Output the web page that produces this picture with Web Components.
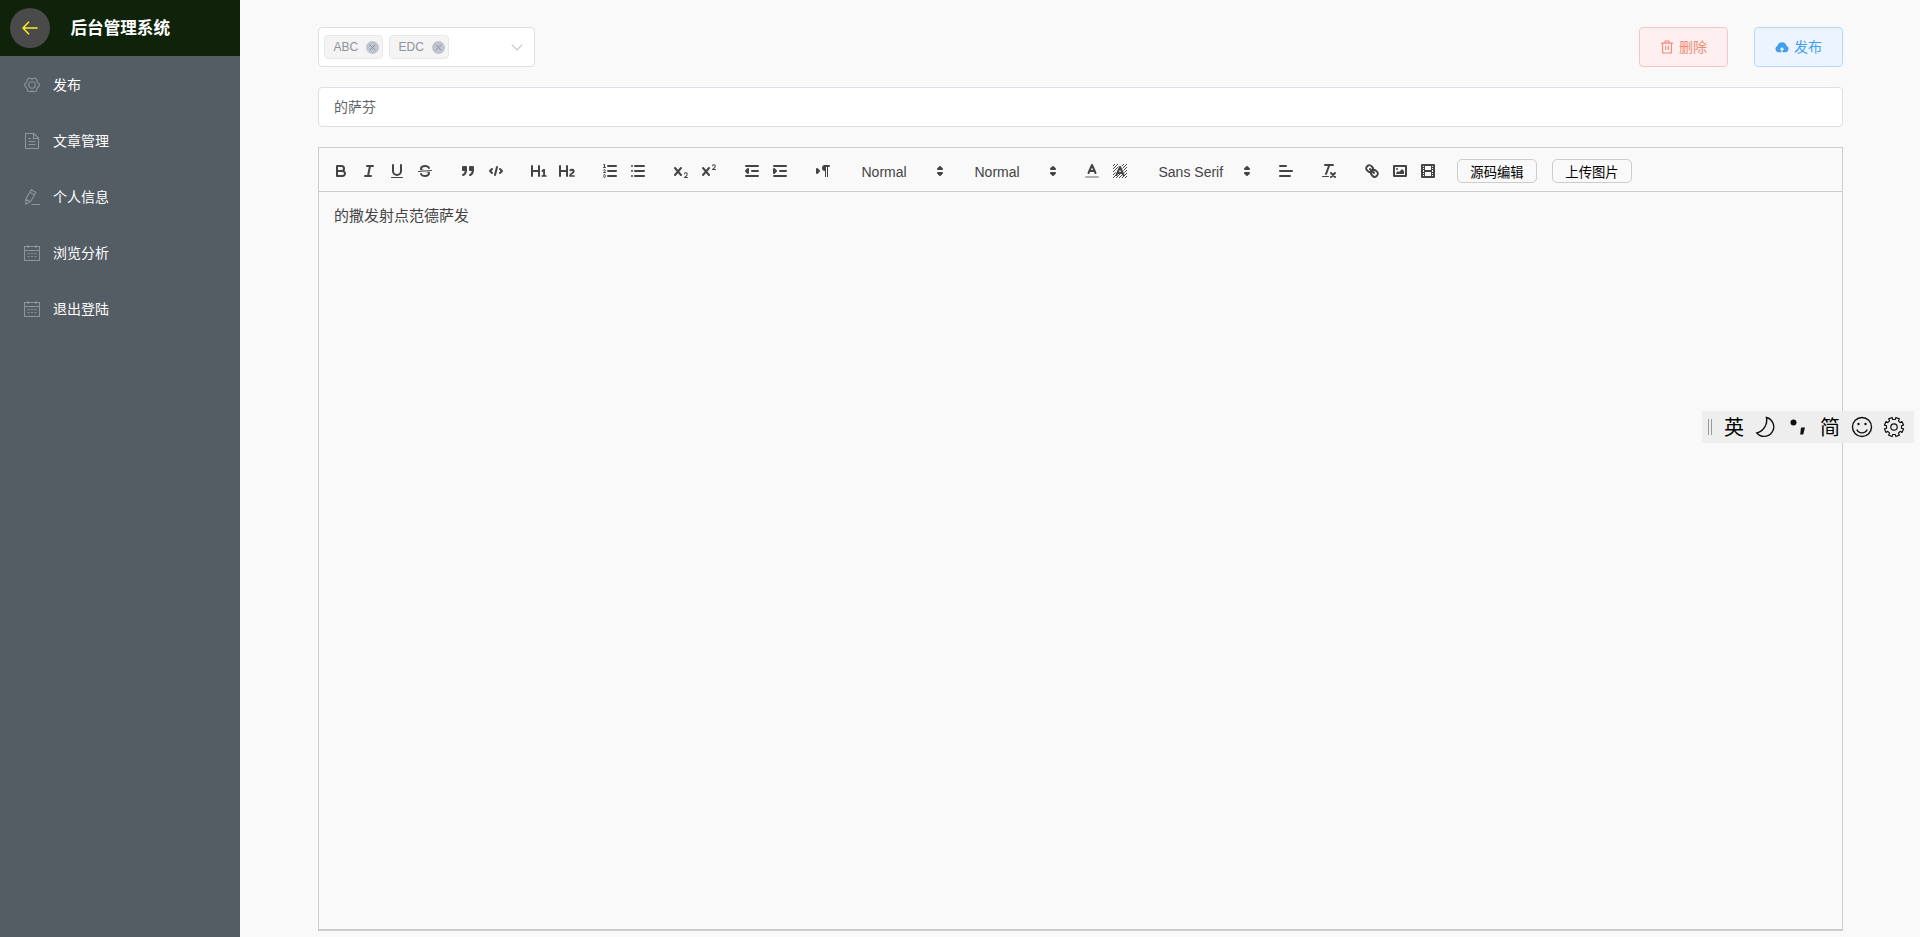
<!DOCTYPE html>
<html lang="zh-CN">
<head>
<meta charset="utf-8">
<title>后台管理系统</title>
<style>
html, body {
    margin: 0;
    height: 100%;
    overflow: hidden;
}
body {
    background: #f9f9f9;
    font-family: "Liberation Sans", "Noto Sans CJK SC", sans-serif;
    font-size: 14px;
    color: #606266;
}
</style>
</head>
<body>
<admin-layout>
    <side-menu slot="aside" heading="后台管理系统">
        <menu-item icon="setting">发布</menu-item>
        <menu-item icon="document">文章管理</menu-item>
        <menu-item icon="edit">个人信息</menu-item>
        <menu-item icon="date">浏览分析</menu-item>
        <menu-item icon="date">退出登陆</menu-item>
    </side-menu>
    <action-row>
        <tag-select>
            <tag-chip>ABC</tag-chip>
            <tag-chip>EDC</tag-chip>
        </tag-select>
        <action-button slot="actions" type="danger" icon="delete">删除</action-button>
        <action-button slot="actions" type="primary" icon="upload">发布</action-button>
    </action-row>
    <text-field>的萨芬</text-field>
    <rich-editor>
        <tool-group slot="toolbar" icons="bold italic underline strike"></tool-group>
        <tool-group slot="toolbar" icons="quote code"></tool-group>
        <tool-group slot="toolbar" icons="h1 h2"></tool-group>
        <tool-group slot="toolbar" icons="ordered bullet"></tool-group>
        <tool-group slot="toolbar" icons="sub super"></tool-group>
        <tool-group slot="toolbar" icons="outdent indent"></tool-group>
        <tool-group slot="toolbar" icons="direction"></tool-group>
        <tool-picker slot="toolbar">Normal</tool-picker>
        <tool-picker slot="toolbar">Normal</tool-picker>
        <tool-group slot="toolbar" icons="color background"></tool-group>
        <tool-picker slot="toolbar" wide>Sans Serif</tool-picker>
        <tool-group slot="toolbar" icons="align"></tool-group>
        <tool-group slot="toolbar" icons="clean"></tool-group>
        <tool-group slot="toolbar" icons="link image video"></tool-group>
        <tool-button slot="toolbar">源码编辑</tool-button>
        <tool-button slot="toolbar">上传图片</tool-button>
        的撒发射点范德萨发
    </rich-editor>
</admin-layout>
<ime-bar></ime-bar>

<script>
// editor icons, 18x18 box. s = stroke, f = fill, t = thin
const toolIcons = {
    bold: '<path class="s" d="M5,4H9.5A2.5,2.5,0,0,1,12,6.5v0A2.5,2.5,0,0,1,9.5,9H5V4Z"/><path class="s" d="M5,9h5.5A2.5,2.5,0,0,1,13,11.5v0A2.5,2.5,0,0,1,10.5,14H5V9Z"/>',
    italic: '<path class="s" d="M7,4H13M5,14H11M8,14L10,4"/>',
    underline: '<path class="s" d="M5,3V9a4.012,4.012,0,0,0,4,4H9a4.012,4.012,0,0,0,4-4V3"/><rect class="f" height="1" rx="0.5" width="12" x="3" y="15"/>',
    strike: '<path class="s t" d="M15.5,8.5L2.5,9.5"/><path class="f" d="M9.007,8C6.542,7.791,6,7.519,6,6.5,6,5.792,7.283,5,9,5c1.571,0,2.765.679,2.969,1.309a1,1,0,0,0,1.9-.617C13.356,4.106,11.354,3,9,3,6.2,3,4,4.538,4,6.5a3.2,3.2,0,0,0,.5,1.843Z"/><path class="f" d="M8.984,10C11.457,10.208,12,10.479,12,11.5c0,0.708-1.283,1.5-3,1.5-1.571,0-2.765-.679-2.969-1.309a1,1,0,1,0-1.9.617C4.644,13.894,6.646,15,9,15c2.8,0,5-1.538,5-3.5a3.2,3.2,0,0,0-.5-1.843Z"/>',
    quote: '<rect class="f s" height="3" width="3" x="4" y="5"/><rect class="f s" height="3" width="3" x="11" y="5"/><path class="f s" d="M7,8c0,4.031-3,5-3,5"/><path class="f s" d="M14,8c0,4.031-3,5-3,5"/>',
    code: '<path class="s" d="M5,7L3,9L5,11M13,7L15,9L13,11M10,5L8,13"/>',
    h1: '<path class="f" d="M10,4V14a1,1,0,0,1-2,0V10H3v4a1,1,0,0,1-2,0V4A1,1,0,0,1,3,4V8H8V4a1,1,0,0,1,2,0Zm6.06787,9.209H14.98975V7.59863a.54085.54085,0,0,0-.605-.60547h-.62744a1.01119,1.01119,0,0,0-.748.29688L11.645,8.56641a.5435.5435,0,0,0-.022.8584l.28613.30762a.53861.53861,0,0,0,.84717.0332l.09912-.08789a1.2137,1.2137,0,0,0,.2417-.35254h.02246s-.01123.30859-.01123.60547V13.209H12.041a.54085.54085,0,0,0-.605.60547v.43945a.54085.54085,0,0,0,.605.60547h4.02686a.54085.54085,0,0,0,.605-.60547v-.43945A.54085.54085,0,0,0,16.06787,13.209Z"/>',
    h2: '<path class="f" d="M16.73975,13.81445v.43945a.54085.54085,0,0,1-.605.60547H11.855a.58392.58392,0,0,1-.64893-.60547V14.0127c0-2.90527,3.39941-3.42187,3.39941-4.55469a.77675.77675,0,0,0-.84717-.78125,1.17684,1.17684,0,0,0-.83594.38477c-.2749.26367-.561.374-.85791.13184l-.4292-.34082c-.30811-.24219-.38525-.51758-.1543-.81445a2.97155,2.97155,0,0,1,2.45361-1.17676,2.45393,2.45393,0,0,1,2.68408,2.40918c0,2.45312-3.1792,2.92676-3.27832,3.93848h2.79443A.54085.54085,0,0,1,16.73975,13.81445ZM9,3A.99974.99974,0,0,0,8,4V8H3V4A1,1,0,0,0,1,4V14a1,1,0,0,0,2,0V10H8v4a1,1,0,0,0,2,0V4A.99974.99974,0,0,0,9,3Z"/>',
    ordered: '<path class="s" d="M7,4H15M7,9H15M7,14H15"/><path class="s t" d="M2.5,5.5H4.5"/><path class="f" d="M3.5,6A0.5,0.5,0,0,1,3,5.5V3.085l-0.276.138A0.5,0.5,0,0,1,2.053,3c-0.124-.247-0.023-0.324.224-0.447l1-.5A0.5,0.5,0,0,1,4,2.5v3A0.5,0.5,0,0,1,3.5,6Z"/><path class="s t" d="M4.5,10.5h-2c0-.234,1.85-1.076,1.85-2.234A0.959,0.959,0,0,0,2.5,8.156"/><path class="s t" d="M2.5,14.846a0.959,0.959,0,0,0,1.85-.109A0.7,0.7,0,0,0,3.75,14a0.688,0.688,0,0,0,.6-0.736,0.959,0.959,0,0,0-1.85-.109"/>',
    bullet: '<path class="s" d="M6,4H15M6,9H15M6,14H15M3,4H3M3,9H3M3,14H3"/>',
    sub: '<path class="f" d="M15.5,15H13.861a3.858,3.858,0,0,0,1.914-2.975,1.8,1.8,0,0,0-1.6-1.751A1.921,1.921,0,0,0,12.021,11.7a0.50013,0.50013,0,1,0,.957.291h0a0.914,0.914,0,0,1,1.053-.725,0.81,0.81,0,0,1,.744.762c0,1.076-1.16971,1.86982-1.93971,2.43082A1.45639,1.45639,0,0,0,12,15.5a0.5,0.5,0,0,0,.5.5h3A0.5,0.5,0,0,0,15.5,15Z"/><path class="s" d="M3,6L9,13M9,6L3,13"/>',
    super: '<path class="f" transform="translate(0,-8)" d="M15.5,15H13.861a3.858,3.858,0,0,0,1.914-2.975,1.8,1.8,0,0,0-1.6-1.751A1.921,1.921,0,0,0,12.021,11.7a0.50013,0.50013,0,1,0,.957.291h0a0.914,0.914,0,0,1,1.053-.725,0.81,0.81,0,0,1,.744.762c0,1.076-1.16971,1.86982-1.93971,2.43082A1.45639,1.45639,0,0,0,12,15.5a0.5,0.5,0,0,0,.5.5h3A0.5,0.5,0,0,0,15.5,15Z"/><path class="s" d="M3,6L9,13M9,6L3,13"/>',
    outdent: '<path class="s" d="M3,14H15M3,4H15M9,9H15"/><path class="f s" d="M5,7V11L3,9L5,7"/>',
    indent: '<path class="s" d="M3,14H15M3,4H15M9,9H15"/><path class="f s" d="M3,7V11L5,9L3,7"/>',
    direction: '<path class="f s" d="M3,11L5,9L3,7V11"/><path class="s" d="M15,4H11"/><path class="f" d="M11,3a3,3,0,0,0,0,6h1V3H11Z"/><rect class="f" height="11" width="1" x="11" y="4"/><rect class="f" height="11" width="1" x="13" y="4"/>',
    color: '<path class="s" opacity=".4" d="M3,15H15"/><path class="s" d="M5.5,11L9,3L12.5,11M11.63,9H6.38"/>',
    background: '<defs><pattern id="hatch" width="3" height="3" patternUnits="userSpaceOnUse"><path d="M0,2h1v1h-1zM1,1h1v1h-1zM2,0h1v1h-1z" fill="#444"/></pattern></defs><path fill="url(#hatch)" d="M2,2H16V16H2Z"/><path d="M5.5,13L9,5L12.5,13" fill="none" stroke="#f9f9f9" stroke-width="3.6"/><path class="s" d="M5.5,13L9,5L12.5,13M11.63,11H6.38"/>',
    align: '<path class="s" d="M3,9H15M3,14H13M3,4H9"/>',
    clean: '<path class="s" d="M5,3H13M6,12L9.35,3M11,11L15,15M15,11L11,15"/><rect class="f" height="1" rx="0.5" width="7" x="2" y="14"/>',
    link: '<path class="s" d="M7,7L11,11"/><path class="s" d="M8.9,4.577a3.476,3.476,0,0,1,.36,4.679A3.476,3.476,0,0,1,4.577,8.9C3.185,7.5,2.035,6.4,4.217,4.217S7.5,3.185,8.9,4.577Z"/><path class="s" d="M13.423,9.1a3.476,3.476,0,0,0-4.679-.36,3.476,3.476,0,0,0,.36,4.679c1.392,1.392,2.5,2.542,4.679.36S14.815,10.5,13.423,9.1Z"/>',
    image: '<rect class="s" height="10" width="12" x="3" y="4"/><circle class="f" cx="6" cy="7" r="1"/><path class="f" d="M5,12V11L7,9L8,10L11,7L13,9V12Z"/>',
    video: '<rect class="s" height="12" width="12" x="3" y="3"/><path class="f" d="M5,3h1v12h-1zM12,3h1v12h-1zM5,8h8v2h-8zM3,5h3v1h-3zM3,7h3v1h-3zM3,10h3v1h-3zM3,12h3v1h-3zM12,5h3v1h-3zM12,7h3v1h-3zM12,10h3v1h-3zM12,12h3v1h-3z"/>'
};
const toolStyle = `
svg { display: block; width: 18px; height: 18px; }
.s { fill: none; stroke: #444; stroke-width: 2; stroke-linecap: round; stroke-linejoin: round; }
.t { stroke-width: 1; }
.f { fill: #444; }
`;

// six soft bumps round a circle
function cogPath() {
    const pts = [];
    for (let a = 0; a < 360; a += 10) {
        const rad = a * Math.PI / 180;
        const r = 6.8 + 0.7 * Math.cos(rad * 6);
        pts.push((8 + r * Math.cos(rad)).toFixed(2) + ' ' + (8 + r * Math.sin(rad)).toFixed(2));
    }
    return 'M' + pts.join('L') + 'Z';
}

// icons used outside of the editor, 16x16 box
const icons = {
    setting: '<path d="' + cogPath() + '"/><circle cx="8" cy="8" r="3.3"/>',
    document: '<path d="M1.500 .5H10L14.500 5V15.500H1.500zM9.500 .5V5.500H14.500M4.500 5.500H7M4.500 8.500H11.500M4.500 11.500H11.500"/>',
    edit: '<path d="M7.200 .8L11.800 3.500 6.500 12.700 1.800 15.200 1.900 10zM5.800 3.200L10.400 5.900M1.900 10.300L6.200 12.800M7.500 15.500H16"/>',
    date: '<path d="M.5 1.500H15.500V15.500H.5zM.5 5.500H15.500M4 0V3M12 0V3M3.500 8.500H5.500M7 8.500H9M10.500 8.500H12.500M3.500 11.500H5.500M7 11.500H9M10.500 11.500H12.500"/>',
    delete: '<path d="M3 3.500V14.800H13V3.500M1 3.500H15M5.800 3V1.200H10.200V3M6.500 6.500V11.500M9.500 6.500V11.500"/>',
    upload: '<path fill="currentColor" stroke="none" fill-rule="evenodd" d="M4.500 14A3.800 3.800 0 0 1 2.900 6.700 5.200 5.200 0 0 1 13.100 6.700 3.800 3.800 0 0 1 11.500 14H8.700V11.200H10.800L8 8 5.200 11.200H7.300V14z"/>'
};

function define(name, html, setup) {
    const template = document.createElement('template');
    template.innerHTML = html;
    customElements.define(name, class extends HTMLElement {
        constructor() {
            super();
            this.attachShadow({mode: 'open'});
            this.shadowRoot.appendChild(template.content.cloneNode(true));
            if (setup) setup(this, this.shadowRoot);
        }
    });
}

function drawIcon(el, root) {
    root.querySelector('svg').innerHTML = icons[el.getAttribute('icon')];
}

define('admin-layout', `
<style>
:host { display: flex; height: 100vh; }
main {
    flex: 1;
    display: flex;
    flex-direction: column;
    gap: 20px;
    box-sizing: border-box;
    padding: 27px 77px 6px 78px;
    min-width: 0;
}
</style>
<slot name="aside"></slot>
<main><slot></slot></main>`);

define('side-menu', `
<style>
:host { display: block; width: 240px; background: #545c64; flex: none; }
header {
    display: flex;
    align-items: center;
    height: 56px;
    padding-left: 10px;
    background: #0f230b;
    color: #fff;
}
.back {
    display: flex;
    align-items: center;
    justify-content: center;
    width: 40px;
    height: 40px;
    border-radius: 50%;
    background: #4a4a4a;
}
h1 { margin: 2px 0 0 20.5px; font-size: 16.6px; font-weight: bold; line-height: 24px; }
</style>
<header>
    <div class="back"><svg width="16" height="14" viewBox="0 0 16 14" fill="none" stroke="#ffee20" stroke-width="1.500"><path d="M15.500 7H1M7 .8L1 7l6 6.200"/></svg></div>
    <h1></h1>
</header>
<nav><slot></slot></nav>`, (el, root) => {
    root.querySelector('h1').innerText = el.getAttribute('heading');
});

define('menu-item', `
<style>
:host { display: flex; align-items: center; height: 56px; padding-left: 24px; color: #fff; font-size: 14px; }
svg { width: 16px; height: 16px; margin: 2px 13px 0 0; color: #909399; }
</style>
<svg viewBox="0 0 16 16" fill="none" stroke="currentColor" stroke-width="1.100"></svg>
<slot></slot>`, drawIcon);

define('action-row', `
<style>
:host { display: flex; justify-content: space-between; height: 40px; flex: none; }
div { display: flex; gap: 26px; }
</style>
<slot></slot>
<div><slot name="actions"></slot></div>`);

define('tag-select', `
<style>
:host {
    display: flex;
    align-items: center;
    gap: 6px;
    box-sizing: border-box;
    width: 217px;
    height: 40px;
    padding: 0 11px 0 5px;
    background: #fff;
    border: 1px solid #dcdfe6;
    border-radius: 4px;
}
svg { margin-left: auto; }
</style>
<slot></slot>
<svg width="12" height="7" viewBox="0 0 12 7" fill="none" stroke="#c0c4cc" stroke-width="1.100"><path d="M.7.700L6 6 11.300.7"/></svg>`);

define('tag-chip', `
<style>
:host {
    display: flex;
    align-items: center;
    justify-content: space-between;
    box-sizing: border-box;
    height: 24px;
    width: 59px;
    padding: 0 3px 0 8.500px;
    background: #f4f4f5;
    border: 1px solid #e9e9eb;
    border-radius: 4px;
    color: #909399;
    font-size: 12px;
}
:host(:last-of-type) { width: 60px; }
</style>
<span><slot></slot></span>
<svg width="13" height="13" viewBox="0 0 13 13"><circle cx="6.500" cy="6.500" r="6.500" fill="#c0c4cc"/><path d="M3.700 3.700l5.600 5.600M9.300 3.700L3.700 9.300" stroke="#909399"/></svg>`);

define('action-button', `
<style>
:host {
    display: flex;
    align-items: center;
    box-sizing: border-box;
    width: 89px;
    height: 40px;
    padding: 0 0 2px 20px;
    border: 1px solid;
    border-radius: 4px;
    font-size: 14px;
}
svg { margin: 2px 5px 0 0; }
:host([type=danger]) { color: #f08a78; background: #fef0f0; border-color: #fbc4c4; }
:host([type=primary]) { color: #409eeb; background: #ecf5ff; border-color: #b3d8ff; }
</style>
<svg width="14" height="14" viewBox="0 0 16 16" fill="none" stroke="currentColor" stroke-width="1.300"></svg>
<slot></slot>`, drawIcon);

define('text-field', `
<style>
:host {
    display: flex;
    align-items: center;
    box-sizing: border-box;
    flex: none;
    height: 40px;
    padding: 0 15px 2px;
    background: #fff;
    border: 1px solid #dcdfe6;
    border-radius: 4px;
}
</style>
<slot></slot>`);

define('rich-editor', `
<style>
:host { display: flex; flex-direction: column; flex: 1; min-height: 0; }
.toolbar {
    display: flex;
    gap: 15px;
    padding: 11px 8px 8px;
    border: 1px solid #ccc;
}
.content {
    flex: 1;
    padding: 13px 15px 11px;
    border: 1px solid #ccc;
    border-top: 0;
    border-bottom-width: 2px;
    font-size: 15px;
    line-height: 1.42;
    color: #444;
}
</style>
<div class="toolbar"><slot name="toolbar"></slot></div>
<div class="content"><slot></slot></div>`);

define('tool-group', `
<style>
:host { display: flex; }
span { padding: 3px 5px; width: 18px; height: 18px; }
${toolStyle}
</style>`, (el, root) => {
    el.getAttribute('icons').split(' ').forEach(name => {
        const btn = document.createElement('span');
        btn.innerHTML = '<svg viewBox="0 0 18 18">' + toolIcons[name] + '</svg>';
        root.appendChild(btn);
    });
});

define('tool-picker', `
<style>
:host {
    display: flex;
    align-items: center;
    justify-content: space-between;
    box-sizing: border-box;
    width: 98px;
    height: 24px;
    padding: 0 1px 0 9.500px;
    color: #444;
    font-size: 14px;
    font-weight: 500;
}
:host([wide]) { width: 108px; }
span { padding-top: 1px; }
${toolStyle}
</style>
<span><slot></slot></span>
<svg viewBox="0 0 18 18"><path class="f s" d="M7,11L9,13L11,11ZM7,7L9,5L11,7Z"/></svg>`);

define('tool-button', `
<style>
:host {
    display: flex;
    align-items: center;
    justify-content: center;
    box-sizing: border-box;
    width: 80px;
    height: 24px;
    border: 1px solid #ccc;
    border-radius: 5px;
    color: #000;
    font-size: 13.333px;
}
</style>
<slot></slot>`);

// floating input-method bar, sits over the page
define('ime-bar', `
<style>
:host {
    position: absolute;
    left: 1702px;
    top: 411px;
    display: flex;
    align-items: center;
    box-sizing: border-box;
    width: 212px;
    height: 32px;
    padding-left: 6px;
    background: #eee;
    color: #000;
    font-size: 20px;
}
i { width: 2px; height: 16px; border: solid #999; border-width: 0 1px; margin-right: 6px; }
span, svg { width: 32px; height: 32px; line-height: 34px; text-align: center; flex: none; }
</style>
<i></i>
<span>英</span>
<svg viewBox="0 0 32 32" fill="none" stroke="#111" stroke-width="1.400"><path d="M16.500 6.500A9.600 9.600 0 1 1 6.800 22 13.500 13.500 0 0 0 16.500 6.500z"/></svg>
<svg viewBox="0 0 32 32"><circle cx="11.500" cy="11.500" r="3" fill="#111"/><path d="M19 16.500h4l-1.800 7h-3z" fill="#111"/></svg>
<span>简</span>
<svg viewBox="0 0 32 32" fill="none" stroke="#111" stroke-width="1.400"><circle cx="16" cy="16" r="9.500"/><path d="M10.800 18.500a5.700 5.700 0 0 0 10.400 0"/><circle cx="12.500" cy="13" r="1.200" fill="#111" stroke="none"/><circle cx="19.500" cy="13" r="1.200" fill="#111" stroke="none"/></svg>
<svg class="gear" viewBox="0 0 32 32" fill="none" stroke="#111" stroke-width="1.200" stroke-linejoin="round"><path/><circle cx="16" cy="16" r="3.200"/></svg>`, (el, root) => {
    // gear with 8 teeth
    const pts = [];
    for (let i = 0; i < 8; i++) {
        [[-13, 7.6], [-11, 9.7], [11, 9.7], [13, 7.6]].forEach(([a, r]) => {
            const rad = (i * 45 + 22.5 + a) * Math.PI / 180;
            pts.push((16 + r * Math.cos(rad)).toFixed(2) + ' ' + (16 + r * Math.sin(rad)).toFixed(2));
        });
    }
    root.querySelector('.gear path').setAttribute('d', 'M' + pts.join('L') + 'Z');
});
</script>
</body>
</html>
